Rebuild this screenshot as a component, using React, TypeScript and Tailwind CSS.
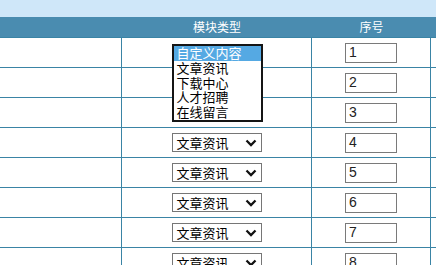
import type { ReactNode } from 'react';

const options = ['自定义内容', '文章资讯', '下载中心', '人才招聘', '在线留言'];
const rows = [1, 2, 3, 4, 5, 6, 7, 8];

function Chevron() {
  return (
    <svg width="12" height="8" viewBox="0 0 12 8" className="shrink-0">
      <path d="M1.5 1.5 L6 6 L10.5 1.5" fill="none" stroke="#111" strokeWidth="2.3" />
    </svg>
  );
}

// row 1 has its dropdown open; the list hides the selects of rows 2 and 3
function TypeSelect({ open, hidden }: { open?: boolean; hidden?: boolean }) {
  if (hidden) return <div className="h-[19px] w-[90px]" />;
  if (open) {
    return (
      <div className="relative h-[19px] w-[90px]">
        <div className="absolute left-0 top-[1px] z-10 w-[91px] border-2 border-[#151515] bg-white text-[13px] leading-[14.8px] text-black">
          {options.map((o, i) => (
            <div key={o} className={`pl-[3px] ${i === 0 ? 'bg-[#55a9e3] text-white' : ''}`}>
              {o}
            </div>
          ))}
        </div>
      </div>
    );
  }
  return (
    <div className="flex h-[19px] w-[90px] items-center justify-between border border-[#767676] bg-white pl-[4px] pr-[4px] text-[13px] leading-none text-black">
      <span>文章资讯</span>
      <Chevron />
    </div>
  );
}

function Cell({ w, children, last }: { w: string; children?: ReactNode; last?: boolean }) {
  return (
    <div className={`flex h-full items-center justify-center ${w} ${last ? 'flex-1' : 'border-r border-[#3a84a5]'}`}>
      {children}
    </div>
  );
}

export default function App() {
  return (
    <div className="h-[265px] w-[436px] overflow-hidden bg-white" style={{ fontFamily: '"Noto Sans CJK SC", "Liberation Sans", sans-serif' }}>
      <div className="h-[17px] bg-[#cfe7f9]" />
      <div className="flex h-[21px] border-b border-[#3a84a5] bg-[#4a8cb0] text-[12px] text-white">
        <div className="w-[122px]" />
        <div className="flex w-[190px] items-center justify-center">模块类型</div>
        <div className="flex w-[119px] items-center justify-center">序号</div>
        <div className="flex-1" />
      </div>
      {rows.map((n) => (
        <div key={n} className="flex h-[30px] border-b border-[#3a84a5]">
          <Cell w="w-[122px]" />
          <Cell w="w-[190px]">
            <TypeSelect open={n === 1} hidden={n === 2 || n === 3} />
          </Cell>
          <Cell w="w-[119px]">
            <div className="flex h-[20px] w-[52px] items-center border border-[#7a7a7a] bg-white pl-[3px] text-[14px] text-[#222]" style={{ fontFamily: '"Liberation Sans", Arial, sans-serif' }}>
              {n}
            </div>
          </Cell>
          <Cell w="" last />
        </div>
      ))}
    </div>
  );
}
